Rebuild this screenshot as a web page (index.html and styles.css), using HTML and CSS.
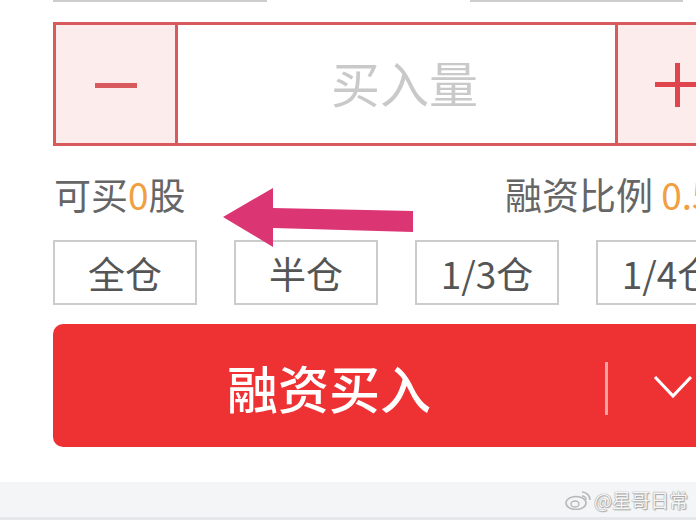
FILE: index.html
```html
<!DOCTYPE html>
<html>
<head>
	<meta charset="utf-8">
	<title>融资买入</title>
	<link rel="stylesheet" href="styles.css">
</head>
<body>
<div class="page">
	<div class="top">
		<div class="stub stub-left"></div>
		<div class="stub stub-right"></div>
	</div>

	<div class="stepper">
		<div class="step minus"><span class="minus-bar"></span></div>
		<div class="qty">买入量</div>
		<div class="step plus"><span class="plus-h"></span><span class="plus-v"></span></div>
	</div>

	<div class="info">
		<div class="can-buy">可买<em>0</em>股</div>
		<div class="ratio">融资比例 <em>0.50</em></div>
	</div>

	<div class="amounts">
		<button class="amt">全仓</button>
		<button class="amt">半仓</button>
		<button class="amt">1/3仓</button>
		<button class="amt">1/4仓</button>
	</div>

	<div class="buy">
		<div class="buy-label">融资买入</div>
		<span class="buy-sep"></span>
		<div class="buy-more">
			<svg width="40" height="26" viewBox="0 0 40 26"><polyline points="2,3 20,22 38,3" fill="none" stroke="#fff" stroke-width="3.2"/></svg>
		</div>
	</div>

	<div class="footer">
		<span class="mark">
			<svg width="28" height="20" viewBox="0 0 28 20">
				<ellipse cx="12" cy="13" rx="10" ry="6.5" fill="none" stroke="#b8b8b8" stroke-width="1.6"/>
				<ellipse cx="11" cy="14" rx="4" ry="3" fill="none" stroke="#b8b8b8" stroke-width="1.4"/>
				<path d="M18 2 a8 8 0 0 1 8 8" fill="none" stroke="#b8b8b8" stroke-width="1.6"/>
				<path d="M18 6 a4 4 0 0 1 4 4" fill="none" stroke="#b8b8b8" stroke-width="1.6"/>
			</svg>
			@星哥日常
		</span>
	</div>

	<!-- 标注箭头 -->
	<svg class="arrow" width="696" height="520" viewBox="0 0 696 520">
		<polygon points="223,217 273,188 273,208 413,211 413,232 273,228 273,247" fill="#dc3573"/>
	</svg>
</div>
</body>
</html>
```

FILE: styles.css
```css
* {
	margin: 0;
	padding: 0;
	box-sizing: border-box;
}
body {
	background: #fff;
	font-family: "Noto Sans CJK SC", "Noto Sans", sans-serif;
	overflow: hidden;
}
.page {
	position: relative;
	width: 696px;
	height: 520px;
	overflow: hidden;
}
.top {
	display: flex;
	height: 3px;
}
.stub {
	height: 30px;
	margin-top: -28px;
	border: 2px solid #cdcdcd;
	border-top: none;
}
.stub-left {
	margin-left: 53px;
	width: 214px;
}
.stub-right {
	margin-left: 203px;
	width: 213px;
}
.stepper {
	display: flex;
	margin-top: 19px;
	margin-left: 53px;
	width: 700px;
	height: 124px;
	border: 3px solid #d95a5c;
}
.step {
	position: relative;
	background: #fdecec;
}
.minus {
	width: 122px;
	border-right: 3px solid #d95a5c;
	display: flex;
	align-items: center;
	justify-content: center;
}
.minus-bar {
	display: block;
	width: 42px;
	height: 5px;
	background: #d95a5c;
	margin-top: 2px;
}
.qty {
	width: 440px;
	border-right: 3px solid #d95a5c;
	display: flex;
	align-items: center;
	justify-content: center;
	padding-left: 16px;
	padding-bottom: 6px;
	font-size: 49px;
	color: #c9c9c9;
}
.plus {
	flex: 1;
}
.plus-h {
	position: absolute;
	left: 37px;
	top: 57px;
	width: 60px;
	height: 5px;
	background: #e0444c;
}
.plus-v {
	position: absolute;
	left: 57px;
	top: 38px;
	width: 5px;
	height: 44px;
	background: #e0444c;
}
.info {
	display: flex;
	margin-top: 23px;
	width: 800px;
	height: 50px;
	line-height: 50px;
	font-size: 37px;
	color: #666;
}
.info em {
	font-style: normal;
	color: #f0a040;
}
.can-buy {
	flex: 0 0 505px;
	padding-left: 54px;
}
.ratio {
	white-space: nowrap;
}
.amounts {
	display: flex;
	gap: 37px;
	margin-top: 21px;
	padding-left: 53px;
	width: 900px;
}
.amt {
	flex: 0 0 144px;
	height: 65px;
	border: 2px solid #cccccc;
	background: #fff;
	font-family: "Noto Sans CJK SC", "Noto Sans", sans-serif;
	font-size: 37px;
	color: #555;
}
.buy {
	display: flex;
	align-items: center;
	margin-top: 19px;
	margin-left: 53px;
	width: 720px;
	height: 123px;
	border-radius: 10px;
	background: #ee3133;
}
.buy-label {
	width: 552px;
	text-align: center;
	font-size: 51px;
	font-weight: 500;
	color: #fff;
	padding-top: 2px;
}
.buy-sep {
	display: block;
	width: 3px;
	height: 53px;
	background: #f7a3a3;
	margin-top: 6px;
}
.buy-more {
	padding-left: 45px;
	padding-top: 8px;
}
.footer {
	display: flex;
	justify-content: flex-end;
	align-items: center;
	margin-top: 35px;
	height: 38px;
	background: #f4f5f7;
	border-bottom: 3px solid #e6e7ea;
	padding-right: 8px;
}
.mark {
	display: flex;
	align-items: center;
	gap: 2px;
	font-size: 19px;
	color: #f6f6f6;
	text-shadow: 0 0 1px #999, 0 0 1px #999, 1px 1px 1px #aaa;
}
.arrow {
	position: absolute;
	left: 0;
	top: 0;
	pointer-events: none;
}
```
